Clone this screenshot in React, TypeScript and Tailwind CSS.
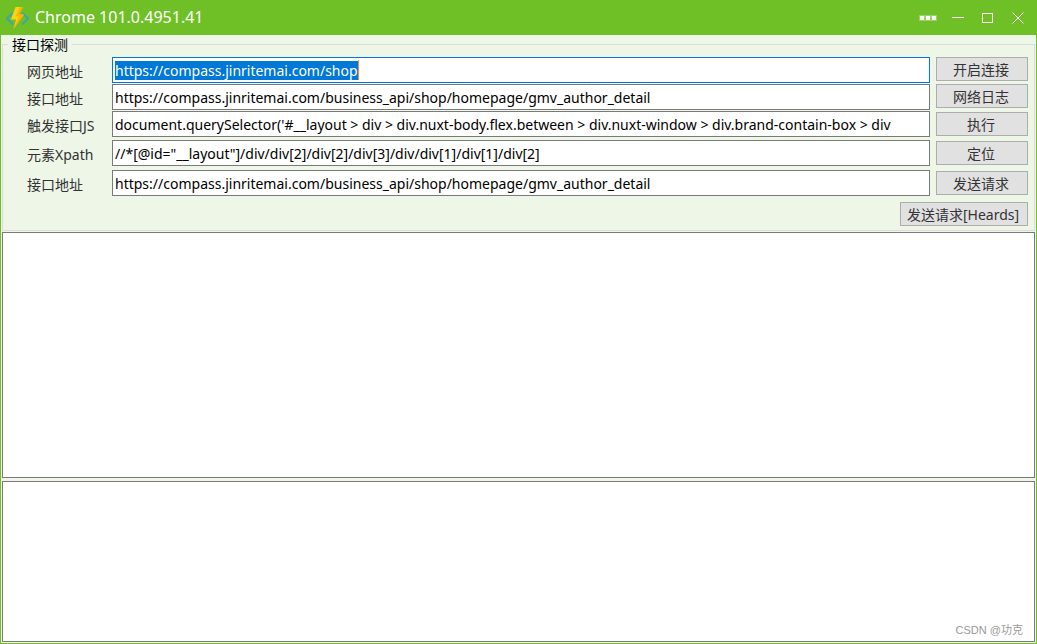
import { useEffect, useRef } from "react";
import clsx from "clsx";

const URL_DETAIL = "https://compass.jinritemai.com/business_api/shop/homepage/gmv_author_detail";

const rows = [
  { id: "page", label: "网页地址", value: "https://compass.jinritemai.com/shop", action: "开启连接", gap: "" },
  { id: "api", label: "接口地址", value: URL_DETAIL, action: "网络日志", gap: "mt-px" },
  {
    id: "js",
    label: "触发接口JS",
    value:
      "document.querySelector('#__layout > div > div.nuxt-body.flex.between > div.nuxt-window > div.brand-contain-box > div",
    action: "执行",
    gap: "mt-px",
  },
  { id: "xpath", label: "元素Xpath", value: '//*[@id="__layout"]/div/div[2]/div[2]/div[3]/div/div[1]/div[1]/div[2]', action: "定位", gap: "mt-[3px]" },
  { id: "send", label: "接口地址", value: URL_DETAIL, action: "发送请求", gap: "mt-1" },
];

const buttonClass =
  "h-6 shrink-0 border border-[#adadad] bg-[#e1e1e1] pr-[2px] pt-[2px] text-sm leading-5 text-[#333] hover:border-[#0078d7] hover:bg-[#e5f1fb]";

function Logo() {
  return (
    <svg className="h-6 w-6 shrink-0" viewBox="0 0 24 24" fill="none">
      <path d="M8 6.5 2 12.5l6 6M17 6.5l6 6-6 6" stroke="#3fa5ad" strokeWidth="2" />
      <path d="M10.5 1H18l-4 7.5h5L8.500 23l2.500-9.500H6z" fill="#fcd116" />
      <path d="M18 1l-4 7.500h5L8.500 23l5.500-12.500h-3.500L15 1z" fill="#ff9f00" fillOpacity=".65" />
    </svg>
  );
}

function TitleBar() {
  return (
    <header className="flex h-[35px] shrink-0 items-center bg-[#6fbf26] pl-1 pr-[3px] text-white">
      <Logo />
      <h1 className="ml-[6px] flex-1 pb-[2px] text-base leading-6">Chrome 101.0.4951.41</h1>
      <button type="button" aria-label="More" className="flex h-6 w-[30px] items-center justify-center">
        <svg width="18" height="6" viewBox="0 0 18 6" fill="currentColor">
          <path d="M1 1h4v4H1zM7 1h4v4H7zM13 1h4v4h-4z" />
          <path d="M0 0h6v6H0zM6 0h6v6H6zM12 0h6v6h-6z" fillOpacity=".3" />
        </svg>
      </button>
      <button type="button" aria-label="Minimize" className="flex h-6 w-[30px] items-center justify-center">
        <svg width="12" height="12" viewBox="0 0 12 12" stroke="currentColor" shapeRendering="crispEdges">
          <path d="M0 5.5h12" />
        </svg>
      </button>
      <button type="button" aria-label="Maximize" className="flex h-6 w-[30px] items-center justify-center">
        <svg width="12" height="12" viewBox="0 0 12 12" fill="none" stroke="currentColor" shapeRendering="crispEdges">
          <path d="M.5 1.5h10v9H.5z" />
        </svg>
      </button>
      <button type="button" aria-label="Close" className="flex h-6 w-[30px] items-center justify-center">
        <svg width="12" height="12" viewBox="0 0 12 12" fill="none" stroke="currentColor">
          <path d="M.5.5l11 11M11.5.5l-11 11" />
        </svg>
      </button>
    </header>
  );
}

export default function App() {
  const first = useRef<HTMLInputElement>(null);

  useEffect(() => {
    first.current?.focus();
    first.current?.select();
  }, []);

  return (
    <div className="flex h-screen flex-col border-x border-b border-[#6fbf26] bg-[#eef6e8] font-['Noto_Sans','Noto_Sans_CJK_SC',sans-serif]">
      <TitleBar />
      <main className="flex min-h-0 flex-1 flex-col px-px pb-px">
        <fieldset className="min-w-0 shrink-0 border border-[#dcdcdc] pb-1 pl-6 pr-[6px] pt-[3px]">
          <legend className="-ml-[19px] px-1 pt-px text-sm leading-[18px] text-black">接口探测</legend>
          {rows.map((row, i) => (
            <div key={row.id} className={clsx("flex items-center", row.gap)}>
              <label htmlFor={row.id} className="w-[85px] shrink-0 pt-1 text-sm leading-5 text-[#333]">
                {row.label}
              </label>
              <div className="relative min-w-0 flex-1">
                <input
                  id={row.id}
                  ref={i === 0 ? first : undefined}
                  type="text"
                  defaultValue={row.value}
                  spellCheck={false}
                  className="block h-[26px] w-full border border-[#7a7a7a] bg-white px-[2px] text-sm leading-5 text-black outline-none selection:bg-[#0078d7] selection:text-white focus:border-[#0078d7]"
                />
                {/* caret at the end of the selection */}
                {i === 0 && <span className="pointer-events-none absolute left-[246px] top-[3px] h-5 w-px bg-[#ff8728]" />}
              </div>
              <button type="button" className={clsx(buttonClass, "ml-[6px] w-[92px]", i < 2 && "self-start")}>
                {row.action}
              </button>
            </div>
          ))}
          <div className="mt-[6px] flex justify-end">
            <button type="button" className={clsx(buttonClass, "w-32")}>
              发送请求[Heards]
            </button>
          </div>
        </fieldset>
        <textarea
          aria-label="Response"
          className="mt-px block min-h-0 w-full flex-[245] resize-none border border-[#7a7a7a] bg-white text-sm outline-none"
        />
        <div className="relative mt-[3px] flex min-h-0 flex-[162]">
          <textarea
            aria-label="Log"
            className="block w-full resize-none border border-[#7a7a7a] bg-white text-sm outline-none"
          />
          <span className="absolute bottom-1 right-3 font-['Liberation_Sans','Noto_Sans_CJK_SC',sans-serif] text-[11px] leading-4 text-[#999]">
            CSDN @功克
          </span>
        </div>
      </main>
    </div>
  );
}
